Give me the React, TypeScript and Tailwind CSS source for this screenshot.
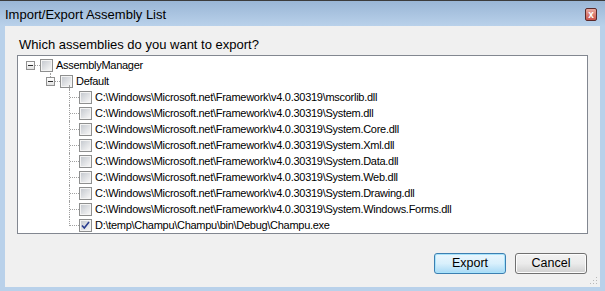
import { ReactNode } from "react";

type Node = {
  label: string;
  level: 0 | 1 | 2;
  checked?: boolean;
  expander?: boolean;
  last?: boolean;
};

const FW = "C:\\Windows\\Microsoft.net\\Framework\\v4.0.30319\\";

const NODES: Node[] = [
  { label: "AssemblyManager", level: 0, expander: true },
  { label: "Default", level: 1, expander: true },
  { label: FW + "mscorlib.dll", level: 2 },
  { label: FW + "System.dll", level: 2 },
  { label: FW + "System.Core.dll", level: 2 },
  { label: FW + "System.Xml.dll", level: 2 },
  { label: FW + "System.Data.dll", level: 2 },
  { label: FW + "System.Web.dll", level: 2 },
  { label: FW + "System.Drawing.dll", level: 2 },
  { label: FW + "System.Windows.Forms.dll", level: 2 },
  { label: "D:\\temp\\Champu\\Champu\\bin\\Debug\\Champu.exe", level: 2, checked: true, last: true },
];

const INDENT = ["pl-[3px]", "pl-[23px]", "pl-[42px]"];

function CheckBox({ checked }: { checked?: boolean }) {
  return (
    <div className="flex h-[13px] w-[13px] shrink-0 items-center justify-center border border-[#8e8f8f] bg-white">
      <div className="flex h-[11px] w-[11px] items-center justify-center border border-[#f4f4f4] bg-gradient-to-br from-[#c6cad0] to-[#f6f6f6]">
        {checked ? (
          <svg width="9" height="9" viewBox="0 0 9 9">
            <path d="M1 4.5 L3.3 7 L8 1" fill="none" stroke="#2a3d8f" strokeWidth="1.6" />
          </svg>
        ) : null}
      </div>
    </div>
  );
}

function Expander() {
  return (
    <div className="relative z-10 flex h-[9px] w-[9px] items-center justify-center border border-[#919191] bg-gradient-to-b from-white to-[#e2e2e2]">
      <div className="h-px w-[5px] bg-[#2d2d2d]" />
    </div>
  );
}

function LineCell({ node }: { node: Node }) {
  let inner: ReactNode;
  if (node.expander) {
    inner = (
      <>
        {node.level === 1 ? (
          <div className="absolute left-[9px] top-0 h-[4px] border-l border-dotted border-[#a0a0a0]" />
        ) : null}
        <div className="absolute left-[14px] top-[8px] w-[5px] border-t border-dotted border-[#a0a0a0]" />
        <Expander />
        {node.level === 1 ? (
          <div className="absolute left-[28px] top-[12px] h-[4px] border-l border-dotted border-[#a0a0a0]" />
        ) : null}
      </>
    );
  } else {
    inner = (
      <>
        <div
          className={
            node.last
              ? "absolute left-[9px] top-0 h-[9px] border-l border-dotted border-[#a0a0a0]"
              : "absolute left-[9px] top-0 h-[16px] border-l border-dotted border-[#a0a0a0]"
          }
        />
        <div className="absolute left-[10px] top-[8px] w-[9px] border-t border-dotted border-[#a0a0a0]" />
      </>
    );
  }
  return <div className="relative flex h-[16px] w-[19px] shrink-0 items-center pl-[5px]">{inner}</div>;
}

function TreeRow({ node }: { node: Node }) {
  return (
    <div className={"flex h-[16px] items-center " + INDENT[node.level]}>
      <LineCell node={node} />
      <CheckBox checked={node.checked} />
      <span className="ml-[3px] whitespace-nowrap text-[11px] leading-[16px] tracking-[-0.28px] text-black">
        {node.label}
      </span>
    </div>
  );
}

function WinButton({ children, focused }: { children: ReactNode; focused?: boolean }) {
  return (
    <button
      type="button"
      className={
        focused
          ? "h-[21px] w-[72px] rounded-[3px] border border-[#3c7fb1] bg-gradient-to-b from-[#eaf6fd] via-[#d9f0fc] to-[#a7d9f5] text-[12.5px] leading-none text-black shadow-[inset_0_0_0_1px_#a8e3fb]"
          : "h-[21px] w-[72px] rounded-[3px] border border-[#707070] bg-gradient-to-b from-[#f2f2f2] via-[#ebebeb] to-[#cfcfcf] text-[12.5px] leading-none text-black shadow-[inset_0_0_0_1px_#fcfcfc]"
      }
    >
      {children}
    </button>
  );
}

export default function App() {
  return (
    <div className="flex h-[291px] w-[605px] flex-col bg-[#b9d1ea] font-['Liberation_Sans',Arial,sans-serif]">
      <div className="h-px bg-[#3c3c3c]" />
      <div className="flex h-[25px] items-center justify-between bg-gradient-to-b from-[#9ab6d6] to-[#b9d1ea] pl-[5px] pr-[8px]">
        <span className="pt-[3px] text-[13px] text-black">Import/Export Assembly List</span>
        <div className="mt-[2px] flex h-[13px] w-[12px] items-center justify-center rounded-[2px] border border-[#5b2a2a] bg-gradient-to-b from-[#e9a99f] to-[#c9534a]">
          <span className="text-[10px] font-bold leading-none text-white">x</span>
        </div>
      </div>
      <div className="mx-[5px] flex h-[261px] flex-col bg-[#f0f0f0] pl-[12px] pr-[12px]">
        <div className="mt-[11px] pl-[2px] text-[13px] leading-[15px] text-black">
          Which assemblies do you want to export?
        </div>
        <div className="mt-[3px] h-[179px] w-[571px] border border-[#828790] bg-white pt-px">
          {NODES.map((node) => (
            <TreeRow key={node.label} node={node} />
          ))}
        </div>
        <div className="mt-[19px] flex justify-end gap-[9px] pr-[1px]">
          <WinButton focused>Export</WinButton>
          <WinButton>Cancel</WinButton>
        </div>
        <div className="relative mt-auto h-[10px]">
          <svg className="absolute -right-[10px] bottom-[2px]" width="8" height="8" viewBox="0 0 8 8">
            <rect x="6" y="0" width="1" height="1" fill="#b8b8b8" />
            <rect x="3" y="3" width="1" height="1" fill="#b8b8b8" />
            <rect x="6" y="3" width="1" height="1" fill="#b8b8b8" />
            <rect x="0" y="6" width="1" height="1" fill="#b8b8b8" />
            <rect x="3" y="6" width="1" height="1" fill="#b8b8b8" />
            <rect x="6" y="6" width="1" height="1" fill="#b8b8b8" />
          </svg>
        </div>
      </div>
    </div>
  );
}
